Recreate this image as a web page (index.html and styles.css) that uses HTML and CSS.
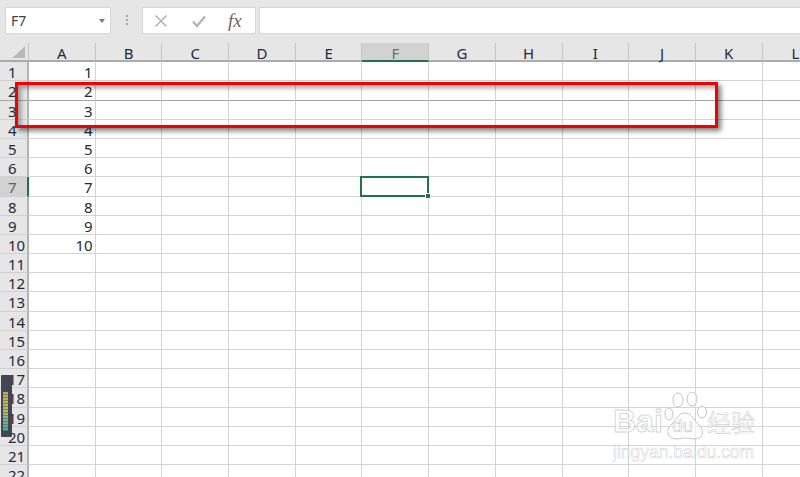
FILE: index.html
```html
<!DOCTYPE html>
<html lang="en">
<head>
    <meta charset="UTF-8">
    <meta name="viewport" content="width=device-width, initial-scale=1.0">
    <title>Excel Sheet</title>
    <link rel="stylesheet" href="styles.css">
</head>
<body>
    <div class="toolbar">
        <div class="name-box">
            <span>F7</span>
            <span class="drop-arrow"></span>
        </div>
        <div class="grip"><i></i><i></i><i></i></div>
        <div class="fx-box">
            <svg class="icon" viewBox="0 0 14 14"><path d="M1.5 1.5 12.5 12.5M12.5 1.5 1.5 12.5" fill="none" stroke="#b4b4b4" stroke-width="1.6"/></svg>
            <svg class="icon" viewBox="0 0 14 14"><path d="M1 7.5 5 12 13 2.5" fill="none" stroke="#b4b4b4" stroke-width="2.4"/></svg>
            <span class="fx">fx</span>
        </div>
        <div class="formula-input"></div>
    </div>

    <div class="sheet" id="sheet"></div>

    <!-- red highlight drawn over rows 2 and 3 -->
    <div class="highlight"></div>

    <div class="meter"><div class="meter-bars"></div></div>

    <div class="watermark">
        <div class="wm-logo">
            <span class="wm-bai">Bai</span>
            <div class="wm-paw">
                <svg viewBox="0 0 44 48" width="44" height="48">
                    <g fill="#fff" fill-opacity="0.6" stroke="#c4c4c4" stroke-width="1">
                        <ellipse cx="6" cy="22" rx="4" ry="6"/>
                        <ellipse cx="15" cy="8" rx="5" ry="7"/>
                        <ellipse cx="29" cy="7" rx="5" ry="7"/>
                        <ellipse cx="39" cy="20" rx="4.5" ry="6"/>
                        <path d="M22 21C15 21 13 29 8 33 2 38 5 47 13 47 17 47 19 46 22 46 26 46 28 47 32 47 40 47 42 38 36 33 31 29 29 21 22 21Z"/>
                    </g>
                </svg>
                <span class="wm-du">du</span>
            </div>
            <span class="wm-cn">经验</span>
        </div>
        <div class="wm-url">jingyan.baidu.com</div>
    </div>

    <script>
        const columns = ["A", "B", "C", "D", "E", "F", "G", "H", "I", "J", "K", "L"];
        const rowCount = 22;

        function addCell(sheet, className, text) {
            const cell = document.createElement("div");
            cell.className = className;
            cell.textContent = text;
            sheet.appendChild(cell);
            return cell;
        }

        function createSheet() {
            const sheet = document.getElementById("sheet");
            addCell(sheet, "corner", "");
            columns.forEach((name) => {
                addCell(sheet, name === "F" ? "col-head selected" : "col-head", name);
            });
            for (let row = 1; row <= rowCount; row++) {
                // the line under row 2 is darker in the screenshot
                const dark = row === 2 ? " dark" : "";
                addCell(sheet, "row-head" + dark + (row === 7 ? " selected" : ""), row);
                columns.forEach((name) => {
                    const value = name === "A" && row <= 10 ? row : "";
                    const active = name === "F" && row === 7 ? " active" : "";
                    addCell(sheet, "cell" + dark + active, value);
                });
            }
        }

        createSheet();
    </script>
</body>
</html>
```

FILE: styles.css
```css
body {
    margin: 0;
    width: 800px;
    height: 477px;
    overflow: hidden;
    position: relative;
    background-color: white;
    font-family: "Noto Sans", Arial, sans-serif;
    color: #1f2a3a;
}

/* Formula bar */
.toolbar {
    height: 43px;
    background-color: #e6e6e6;
    display: flex;
    align-items: flex-start;
    padding: 7px 0 0 5px;
    box-sizing: border-box;
}

.name-box,
.fx-box,
.formula-input {
    height: 27px;
    box-sizing: border-box;
    background-color: white;
    border: 1px solid #d6d6d6;
}

.name-box {
    width: 106px;
    display: flex;
    justify-content: space-between;
    align-items: center;
    padding: 0 5px;
    font-size: 14px;
    color: #444;
}

.drop-arrow {
    width: 0;
    height: 0;
    border-left: 3px solid transparent;
    border-right: 3px solid transparent;
    border-top: 4px solid #777;
}

.grip {
    width: 31px;
    height: 26px;
    display: flex;
    flex-direction: column;
    align-items: center;
    justify-content: center;
    gap: 2px;
}

.grip i {
    width: 2px;
    height: 2px;
    background-color: #a8a8a8;
}

.fx-box {
    width: 114px;
    margin-right: 3px;
    display: flex;
    align-items: center;
    padding-left: 11px;
    gap: 24px;
}

.icon {
    width: 14px;
    height: 14px;
    flex-shrink: 0;
}

.fx {
    font-family: "Liberation Serif", serif;
    font-style: italic;
    font-size: 19px;
    color: #666;
    margin-left: -2px;
}

.formula-input {
    flex: 1;
    border-right: none;
}

/* Sheet grid */
.sheet {
    display: grid;
    grid-template-columns: 29px repeat(12, 66.7px);
    grid-auto-rows: 19.2px;
    font-size: 15px;
    line-height: 19px;
}

.sheet > div {
    box-sizing: border-box;
    padding-top: 1px;
}

.corner,
.col-head {
    background-color: #e6e6e6;
    border-bottom: 2px solid #ababab;
    border-right: 1px solid #c4c4c4;
}

.corner {
    position: relative;
}

.corner::after {
    content: "";
    position: absolute;
    right: 3px;
    bottom: 2px;
    width: 13px;
    height: 12px;
    background-color: #b8b8b8;
    clip-path: polygon(100% 0, 100% 100%, 0 100%);
}

.col-head {
    text-align: center;
}

.col-head.selected {
    background-color: #d2d2d2;
    border-bottom-color: #217346;
    color: #5a7a68;
}

.row-head {
    background-color: #e6e6e6;
    border-right: 2px solid #b4b4b4;
    border-bottom: 1px solid #d0d0d0;
    padding-left: 8px;
    text-align: left;
}

.row-head.selected {
    background-color: #d2d2d2;
    border-right-color: #217346;
    color: #4a6a5a;
}

.cell {
    border-right: 1px solid #d4d4d4;
    border-bottom: 1px solid #d4d4d4;
    text-align: right;
    padding-right: 2px;
}

.dark {
    border-bottom-color: #a6a6a6;
}

.cell.active {
    position: relative;
    overflow: visible;
}

.cell.active::before {
    content: "";
    position: absolute;
    left: -2px;
    top: -1px;
    right: -1px;
    bottom: -1px;
    border: 2px solid #217346;
}

.cell.active::after {
    content: "";
    position: absolute;
    right: -3px;
    bottom: -3px;
    width: 6px;
    height: 6px;
    background-color: #217346;
    border: 1px solid white;
    box-sizing: border-box;
}

/* Annotation over the sheet */
.highlight {
    position: absolute;
    left: 15px;
    top: 82px;
    width: 703px;
    height: 46px;
    box-sizing: border-box;
    border: 3px solid #f00000;
    box-shadow: 3px 3px 5px rgba(0, 0, 0, 0.5), inset 3px 3px 5px rgba(0, 0, 0, 0.35);
}

.meter {
    position: absolute;
    left: 1px;
    top: 375px;
    width: 11px;
    height: 62px;
    background-color: #3f4854;
    border-radius: 1px;
}

.meter-bars {
    position: absolute;
    left: 2px;
    top: 17px;
    width: 5px;
    height: 39px;
    background: linear-gradient(#c9a84e, #b9b95c 50%, #5fb08c 85%, #55a8a0);
}

.meter-bars::after {
    content: "";
    position: absolute;
    inset: 0;
    background: repeating-linear-gradient(transparent 0 2px, rgba(50, 60, 70, 0.4) 2px 3px);
}

/* Baidu watermark */
.watermark {
    position: absolute;
    left: 613px;
    top: 392px;
    width: 150px;
    color: rgba(255, 255, 255, 0.65);
    -webkit-text-stroke: 1px rgba(185, 185, 185, 0.6);
}

.wm-logo {
    display: flex;
    align-items: flex-end;
    height: 48px;
}

.wm-bai {
    font-family: "Liberation Sans", Arial, sans-serif;
    font-weight: bold;
    font-size: 32px;
    line-height: 38px;
    width: 50px;
}

.wm-paw {
    position: relative;
    width: 44px;
    height: 48px;
}

.wm-du {
    position: absolute;
    left: 9px;
    bottom: 3px;
    font-family: "Liberation Sans", Arial, sans-serif;
    font-size: 19px;
    line-height: 22px;
    -webkit-text-stroke: 0.6px rgba(175, 175, 175, 0.7);
}

.wm-cn {
    font-family: "Noto Sans CJK SC", sans-serif;
    font-size: 24px;
    line-height: 36px;
    white-space: nowrap;
    -webkit-text-stroke: 0.7px rgba(185, 185, 185, 0.6);
}

.wm-url {
    font-family: "Liberation Sans", Arial, sans-serif;
    font-size: 17.5px;
    line-height: 20px;
    margin-top: 2px;
    white-space: nowrap;
    -webkit-text-stroke: 0.6px rgba(185, 185, 185, 0.6);
}
```
